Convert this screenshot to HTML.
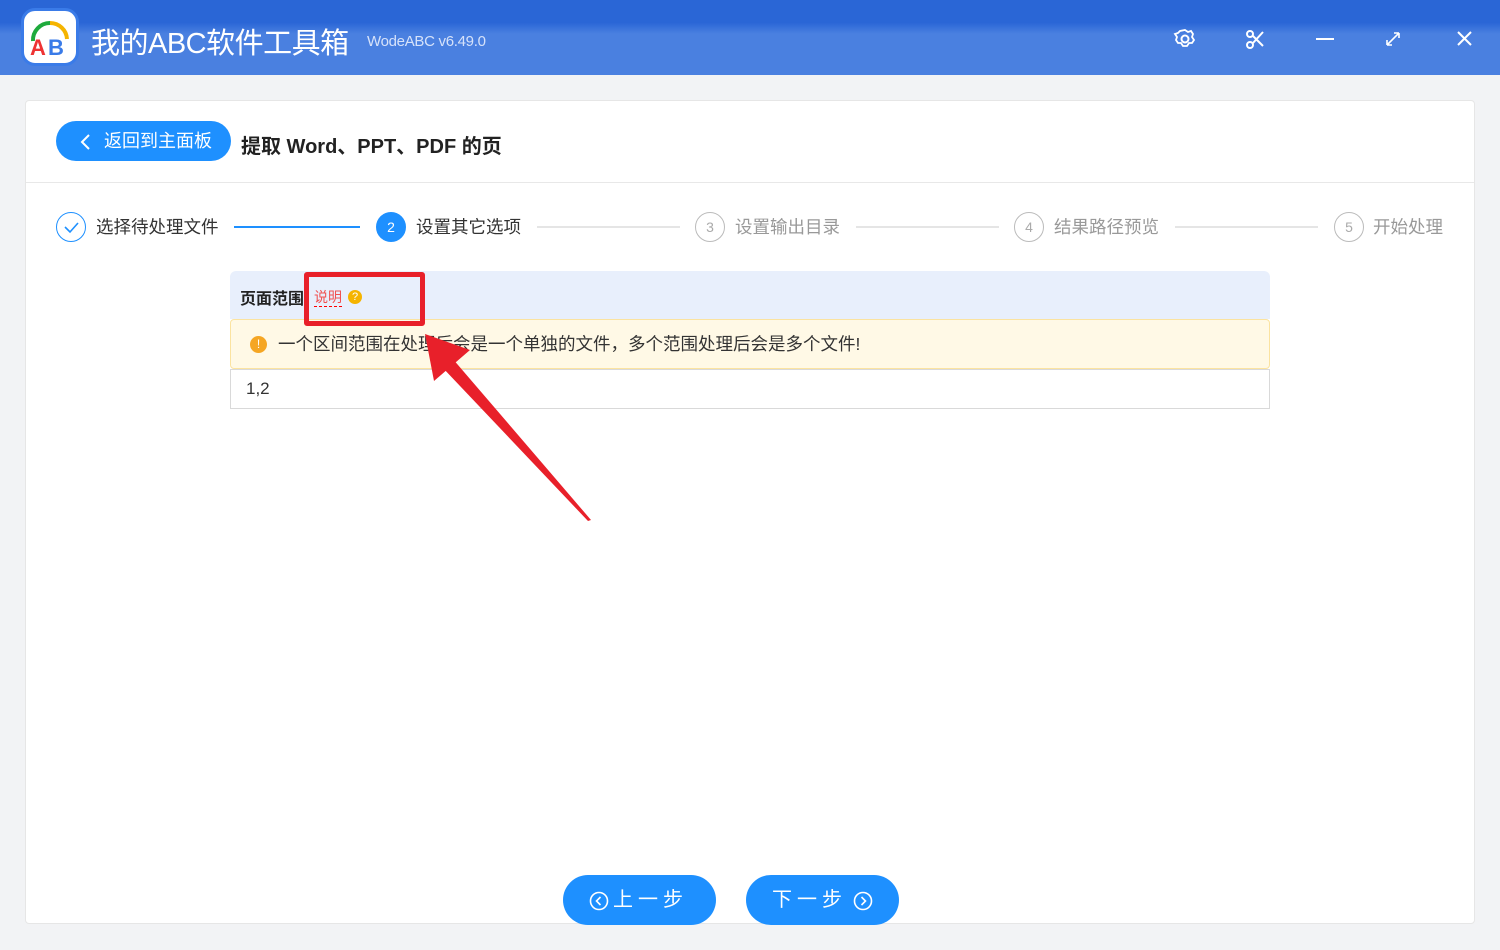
<!DOCTYPE html>
<html><head><meta charset="utf-8"><style>
*{margin:0;padding:0;box-sizing:border-box}
body{width:1500px;height:950px;background:#f2f3f5;font-family:"Liberation Sans","Noto Sans CJK SC",sans-serif;position:relative;overflow:hidden}
.top{position:absolute;left:0;top:0;width:1500px;height:75px;background:linear-gradient(180deg,#2a66d6 0,#2a66d6 30%,#4a80e0 45%,#4a80e0 100%)}
.logo{position:absolute;left:21px;top:8px;width:58px;height:58px;border-radius:14px;background:#fff;border:3px solid #3a7be8}
.t1{position:absolute;left:91px;top:20px;color:#fff;font-size:29px;letter-spacing:-0.5px}
.t2{position:absolute;left:367px;top:33px;color:#d6e2fa;font-size:15px;letter-spacing:-0.3px}
.card{position:absolute;left:25px;top:100px;width:1450px;height:824px;background:#fff;border:1px solid #e6e6e6;border-radius:4px}
.back{position:absolute;left:56px;top:121px;width:175px;height:40px;border-radius:20px;background:#1e90ff;color:#fff;font-size:18px;line-height:40px;padding-left:48px}
.h{position:absolute;left:241px;top:130px;font-size:20px;font-weight:bold;color:#222}
.hr{position:absolute;left:26px;top:182px;width:1448px;height:1px;background:#e8e8e8}
.st{position:absolute;top:213px;font-size:17.5px;color:#999;line-height:28px}
.c{position:absolute;top:212px;width:30px;height:30px;border-radius:50%;border:1px solid #bbb;color:#aaa;font-size:14px;text-align:center;line-height:28px}
.ln{position:absolute;top:226px;height:2px;background:#e5e5e5}
.bar{position:absolute;left:230px;top:271px;width:1040px;height:48px;background:#e8effc;border-radius:6px 6px 0 0}
.warn{position:absolute;left:230px;top:319px;width:1040px;height:50px;background:#fff9e6;border:1px solid #fbe3a0;border-radius:4px;font-size:17.5px;color:#333;line-height:48px;padding-left:47px}
.inp{position:absolute;left:230px;top:369px;width:1040px;height:40px;border:1px solid #d9d9d9;font-size:17px;line-height:38px;padding-left:15px;color:#333}
.btn{position:absolute;top:875px;width:153px;height:50px;border-radius:25px;background:#1e90ff;color:#fff;font-size:20px;line-height:50px;text-align:center;letter-spacing:5px}
</style></head><body>
<div class="top">
<div class="logo"><svg width="52" height="52" viewBox="0 0 52 52"><path d="M9 30 A17 17 0 0 1 26 12" stroke="#1eaa3c" stroke-width="4" fill="none"/><path d="M26 12 A17 17 0 0 1 43 28" stroke="#f5b400" stroke-width="4" fill="none"/><text x="6" y="44" font-size="22" font-family="Liberation Sans" fill="#e33" font-weight="bold">A</text><text x="24" y="44" font-size="22" font-family="Liberation Sans" fill="#3a7be8" font-weight="bold">B</text></svg></div>
<div class="t1">我的ABC软件工具箱</div><div class="t2">WodeABC v6.49.0</div>
<svg style="position:absolute;left:1170px;top:25px" width="310" height="30" fill="none" stroke="#fff" stroke-width="2">
<circle cx="15" cy="14" r="3.5"/><path d="M15 5 l3 2 3 -1 2 3 -1 3 2 3 -2 3 -3 0 -2 3 -4 0 -2 -3 -3 0 -2 -3 1 -3 -2 -3 3 -1 2 -2z" stroke-width="1.8"/>
<circle cx="80" cy="9" r="3"/><circle cx="80" cy="20" r="3"/><path d="M83 11 L93 21 M83 18 L93 7"/>
<path d="M146 14 H164"/>
<path d="M217 20 L229 8 M217 20 v-5 M217 20 h5 M229 8 h-5 M229 8 v5" stroke-width="1.6"/>
<path d="M288 7 L301 20 M301 7 L288 20"/></svg>
</div>
<div class="card"></div>
<div class="back">返回到主面板</div>
<svg style="position:absolute;left:79px;top:133px" width="14" height="18"><path d="M10 2 L3 9 L10 16" stroke="#fff" stroke-width="2" fill="none"/></svg>
<div class="h">提取 Word、PPT、PDF 的页</div>
<div class="hr"></div>
<div class="c" style="left:56px;border-color:#1e90ff"><svg width="28" height="28"><path d="M8 14 l5 5 l8 -9" stroke="#1e90ff" stroke-width="1.6" fill="none"/></svg></div>
<div class="st" style="left:96px;color:#333">选择待处理文件</div>
<div class="ln" style="left:234px;width:126px;background:#1e90ff"></div>
<div class="c" style="left:376px;background:#1e90ff;border-color:#1e90ff;color:#fff">2</div>
<div class="st" style="left:416px;color:#333">设置其它选项</div>
<div class="ln" style="left:537px;width:143px"></div>
<div class="c" style="left:695px">3</div><div class="st" style="left:735px">设置输出目录</div>
<div class="ln" style="left:856px;width:143px"></div>
<div class="c" style="left:1014px">4</div><div class="st" style="left:1054px">结果路径预览</div>
<div class="ln" style="left:1175px;width:143px"></div>
<div class="c" style="left:1334px">5</div><div class="st" style="left:1373px">开始处理</div>
<div class="bar"><span style="position:absolute;left:10px;top:14px;font-size:16px;font-weight:bold;color:#222">页面范围</span><span style="position:absolute;left:84px;top:17px;font-size:14px;color:#f05050;border-bottom:1px dashed #f00;line-height:18px">说明</span><span style="position:absolute;left:118px;top:19px;width:14px;height:14px;border-radius:50%;background:#f5b400;color:#fff;font-size:11px;text-align:center;line-height:14px">?</span></div>
<div class="warn"><span style="position:absolute;left:19px;top:16px;width:17px;height:17px;border-radius:50%;background:#f5a623;color:#fff;font-size:12px;text-align:center;line-height:17px">!</span>一个区间范围在处理后会是一个单独的文件，多个范围处理后会是多个文件!</div>
<div class="inp">1,2</div>
<div style="position:absolute;left:304px;top:272px;width:121px;height:54px;border:5px solid #e8202a;border-radius:3px;z-index:5"></div>
<svg style="position:absolute;left:0;top:0;z-index:6" width="1500" height="950"><polygon points="591,520 588,521 442,367 452,358" fill="#e8202a"/><polygon points="425,334 434,381 470,350" fill="#e8202a"/></svg>
<div class="btn" style="left:563px;padding-left:22px">上一步</div>
<svg style="position:absolute;left:589px;top:891px" width="20" height="20" fill="none" stroke="#fff" stroke-width="1.6"><circle cx="10" cy="10" r="8.5"/><path d="M11.5 6 L7.5 10 L11.5 14"/></svg>
<div class="btn" style="left:746px;padding-right:26px">下一步</div>
<svg style="position:absolute;left:853px;top:891px" width="20" height="20" fill="none" stroke="#fff" stroke-width="1.6"><circle cx="10" cy="10" r="8.5"/><path d="M8.5 6 L12.5 10 L8.5 14"/></svg>
</body></html>
